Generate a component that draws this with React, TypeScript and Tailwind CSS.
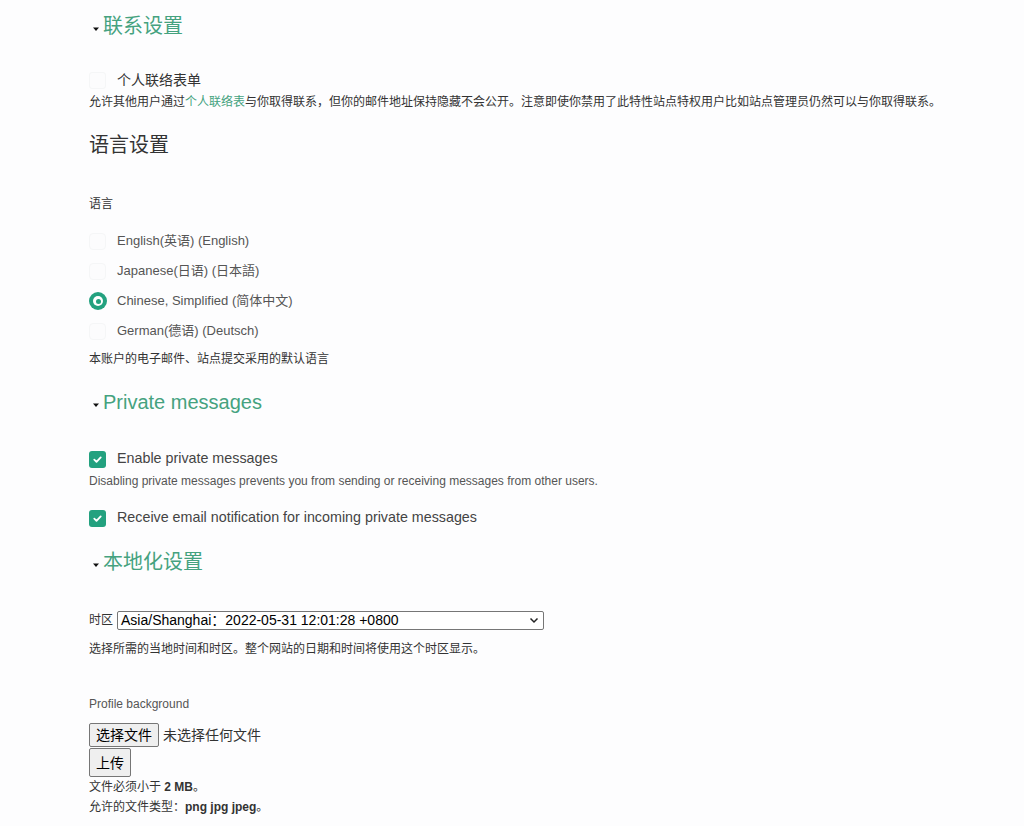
import React from "react";

const font = "font-['Liberation_Sans','Noto_Sans_CJK_SC',sans-serif]";

const Caret = () => (
  <svg width="8" height="8" viewBox="0 0 8 8" className="mr-[3px] mt-[6px] shrink-0">
    <path d="M1 2.5h6L4 6z" fill="#111" />
  </svg>
);

const SectionTitle: React.FC<{ title: string; caret?: boolean; className?: string }> = ({
  title,
  caret = true,
  className = "",
}) => (
  <div className={`flex items-center h-[28px] ${caret ? "pl-[3px]" : ""} ${className}`}>
    {caret && <Caret />}
    <span className={`text-[20px] leading-[28px] ${caret ? "text-[#45a27f]" : "text-[#333]"}`}>{title}</span>
  </div>
);

const CheckBox: React.FC<{ checked?: boolean }> = ({ checked }) =>
  checked ? (
    <span className="w-[17px] h-[17px] rounded-[3px] bg-[#23a17f] flex items-center justify-center shrink-0">
      <svg width="11" height="11" viewBox="0 0 12 12">
        <path d="M2.5 6.2l2.4 2.3 4.6-4.8" stroke="#fff" strokeWidth="2" fill="none" strokeLinecap="round" strokeLinejoin="round" />
      </svg>
    </span>
  ) : (
    <span className="w-[17px] h-[17px] rounded-[3px] border border-[#f5f6f7] bg-[#fcfcfd] shrink-0" />
  );

const Radio: React.FC<{ checked?: boolean }> = ({ checked }) =>
  checked ? (
    <span className="w-[18px] h-[18px] rounded-full bg-[#23a17f] flex items-center justify-center shrink-0">
      <span className="w-[10px] h-[10px] rounded-full bg-white flex items-center justify-center">
        <span className="w-[5px] h-[5px] rounded-full bg-[#23a17f]" />
      </span>
    </span>
  ) : (
    <span className="w-[17px] h-[17px] rounded-[4px] border border-[#f5f6f7] bg-[#fcfcfd] shrink-0" />
  );

const languages = [
  { label: "English(英语) (English)", checked: false },
  { label: "Japanese(日语) (日本語)", checked: false },
  { label: "Chinese, Simplified (简体中文)", checked: true },
  { label: "German(德语) (Deutsch)", checked: false },
];

const btn =
  "bg-[#efefef] border border-[#767676] rounded-[2px] text-[14px] text-black leading-none";

export default function App() {
  return (
    <div className={`${font} bg-[#fdfdfe] min-h-[826px] w-[1024px] pl-[89px] pt-[12px] text-[#333]`}>
      <SectionTitle title="联系设置" />

      <div className="mt-[30px] flex items-center h-[20px]">
        <CheckBox />
        <span className="ml-[11px] text-[14px] text-[#333]">个人联络表单</span>
      </div>
      <p className="mt-[3px] text-[12px] leading-[18px] text-[#333]">
        允许其他用户通过<span className="text-[#45a27f]">个人联络表</span>
        与你取得联系，但你的邮件地址保持隐藏不会公开。注意即使你禁用了此特性站点特权用户比如站点管理员仍然可以与你取得联系。
      </p>

      <SectionTitle title="语言设置" caret={false} className="mt-[20px]" />

      <p className="mt-[36px] text-[12px] leading-[18px] text-[#333]">语言</p>

      <div className="mt-[13px] flex flex-col">
        {languages.map((l) => (
          <div key={l.label} className="flex items-center h-[30px]">
            <Radio checked={l.checked} />
            <span className={`${l.checked ? "ml-[10px]" : "ml-[11px]"} text-[13px] text-[#555]`}>{l.label}</span>
          </div>
        ))}
      </div>
      <p className="mt-[4px] text-[12px] leading-[18px] text-[#333]">本账户的电子邮件、站点提交采用的默认语言</p>

      <SectionTitle title="Private messages" className="mt-[20px]" />

      <div className="mt-[33px] flex items-center h-[20px]">
        <CheckBox checked />
        <span className="ml-[11px] text-[14.3px] text-[#444]">Enable private messages</span>
      </div>
      <p className="mt-[3px] text-[12px] leading-[18px] text-[#555]">
        Disabling private messages prevents you from sending or receiving messages from other users.
      </p>
      <div className="mt-[18px] flex items-center h-[20px]">
        <CheckBox checked />
        <span className="ml-[11px] text-[14.3px] text-[#444]">Receive email notification for incoming private messages</span>
      </div>

      <SectionTitle title="本地化设置" className="mt-[20px]" />

      <div className="mt-[34px] flex items-center h-[20px]">
        <span className="text-[12px] text-[#333]">时区</span>
        <div className="ml-[4px] w-[427px] h-[19px] border border-[#767676] rounded-[2px] bg-white flex items-center justify-between px-[3px]">
          <span className="text-[14px] text-black">Asia/Shanghai：2022-05-31 12:01:28 +0800</span>
          <svg width="10" height="10" viewBox="0 0 10 10" className="mr-[1px]">
            <path d="M1.5 3.5L5 7l3.5-3.5" stroke="#222" strokeWidth="1.5" fill="none" />
          </svg>
        </div>
      </div>
      <p className="mt-[10px] text-[12px] leading-[18px] text-[#333]">
        选择所需的当地时间和时区。整个网站的日期和时间将使用这个时区显示。
      </p>

      <p className="mt-[37px] text-[12px] leading-[18px] text-[#555]">Profile background</p>

      <div className="mt-[10px] flex items-center">
        <button className={`${btn} h-[24px] px-[6px]`}>选择文件</button>
        <span className="ml-[4px] text-[14px] text-[#333]">未选择任何文件</span>
      </div>
      <button className={`${btn} mt-[1px] h-[29px] px-[6px] block`}>上传</button>

      <p className="text-[12px] leading-[20px] text-[#333]">
        文件必须小于 <strong className="font-bold">2 MB</strong>。
      </p>
      <p className="text-[12px] leading-[20px] text-[#333]">
        允许的文件类型：<strong className="font-bold">png jpg jpeg</strong>。
      </p>
    </div>
  );
}
